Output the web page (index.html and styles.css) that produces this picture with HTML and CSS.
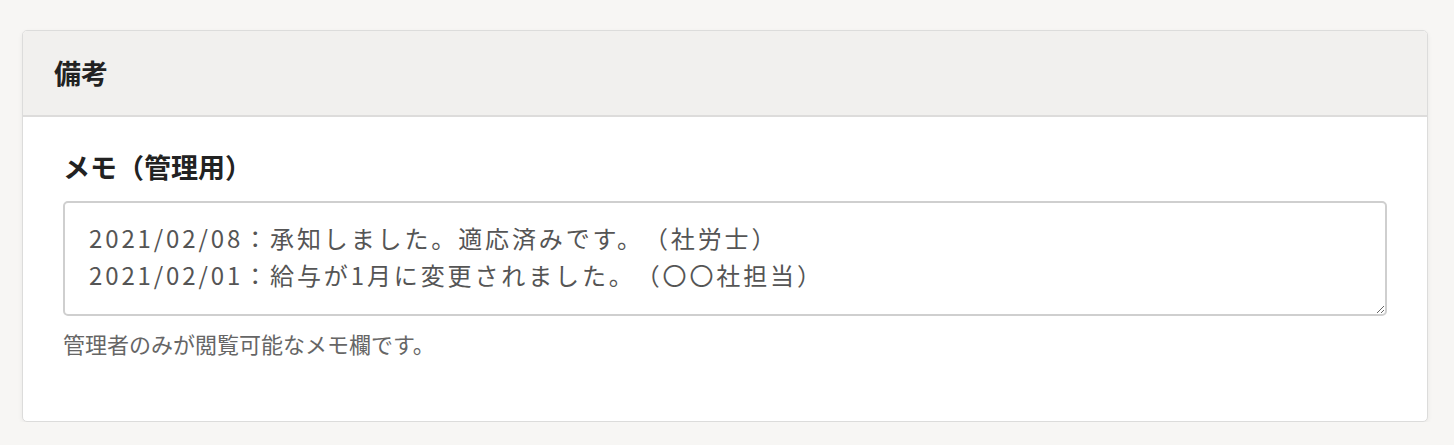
FILE: index.html
```html
<!DOCTYPE html>
<html lang="ja">
<head>
<meta charset="utf-8">
<title>備考</title>
<link rel="stylesheet" href="styles.css">
</head>
<body>
  <section class="card">
    <header class="card-header">
      <h2 class="card-title">備考</h2>
    </header>
    <div class="card-body">
      <label class="field-label" for="memo">メモ（管理用）</label>
      <textarea id="memo" class="memo">2021/02/08：承知しました。適応済みです。（社労士）
2021/02/01：給与が1月に変更されました。（〇〇社担当）</textarea>
      <p class="help">管理者のみが閲覧可能なメモ欄です。</p>
    </div>
  </section>
</body>
</html>
```

FILE: styles.css
```css
html, body {
  margin: 0;
  padding: 0;
  background: #f7f6f4;
}

body {
  padding: 30px 26px 0 22px;
  font-family: "Noto Sans CJK JP", "Noto Sans", sans-serif;
  color: #222;
  text-spacing-trim: space-all;
}

.card {
  background: #fff;
  border: 1px solid #dcdcdb;
  border-radius: 5px;
  box-shadow: 0 2px 5px rgba(0, 0, 0, 0.06);
  overflow: hidden;
}

.card-header {
  background: #f1f0ee;
  border-bottom: 2px solid #dddcdb;
  height: 84px;
  display: flex;
  align-items: center;
  padding: 0 31px;
}

.card-title {
  margin: 0;
  font-size: 27px;
  font-weight: 700;
  line-height: 36px;
  color: #222;
}

.card-body {
  padding: 32px 40px 63px 40px;
  display: flex;
  flex-direction: column;
}

.field-label {
  font-size: 27px;
  font-weight: 700;
  line-height: 36px;
  color: #222;
  margin-bottom: 16px;
}

.memo {
  box-sizing: border-box;
  width: 100%;
  height: 115px;
  margin: 0;
  padding: 16px 24px;
  border: 2px solid #cfcfcf;
  border-radius: 5px;
  font-family: "Noto Sans CJK JP", sans-serif;
  font-size: 24px;
  letter-spacing: 0.12em;
  line-height: 37px;
  color: #555;
  background: #fff;
  resize: vertical;
  outline: none;
  text-spacing-trim: space-all;
}

.help {
  margin: 12px 0 0;
  font-size: 22px;
  line-height: 30px;
  color: #666;
}
```
